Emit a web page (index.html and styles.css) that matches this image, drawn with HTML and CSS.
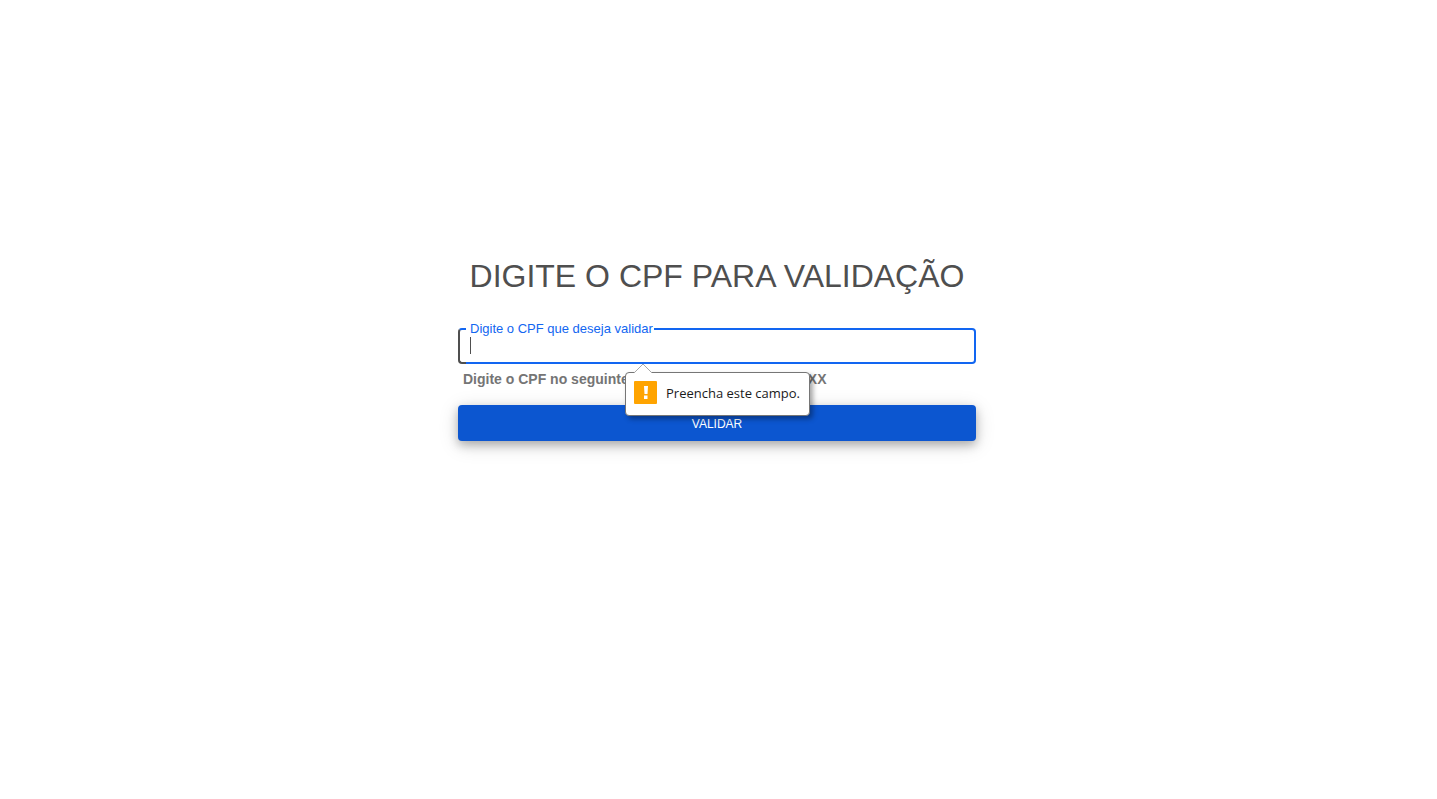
FILE: index.html
```html
<!DOCTYPE html>
<html lang="pt-BR">
<head>
<meta charset="utf-8">
<title>Validação de CPF</title>
<link rel="stylesheet" href="styles.css">
</head>
<body>
<main class="page">
  <form class="form" novalidate>
    <h1 class="title">DIGITE O CPF PARA VALIDAÇÃO</h1>
    <div class="field">
      <div class="notch" aria-hidden="true">
        <span class="notch-leading"></span>
        <span class="notch-middle"></span>
        <span class="notch-trailing"></span>
      </div>
      <label class="label" for="cpf">Digite o CPF que deseja validar</label>
      <input class="input" id="cpf" type="text" required aria-describedby="hint">
      <span class="caret"></span>
      <div class="tooltip" role="alert">
        <svg class="tooltip-arrow" width="18" height="10" viewBox="0 0 18 10" aria-hidden="true">
          <path d="M0 10 L9 1 L18 10" fill="#fff" stroke="#a8a8a8"/>
        </svg>
        <svg width="23" height="23" viewBox="0 0 23 23" aria-hidden="true">
          <rect width="23" height="23" rx="1" fill="#ffa400"/>
          <path d="M10 5h4l-.5 8h-3zM10 14.500h3.500v3.500h-3.500z" fill="#fff"/>
        </svg>
        <span>Preencha este campo.</span>
      </div>
    </div>
    <p class="hint" id="hint"><span>Digite o CPF no seguinte formato:</span><span>XXX.XXX.XXX-XX</span></p>
    <button class="button" type="submit">VALIDAR</button>
  </form>
</main>
</body>
</html>
```
FILE: styles.css
```css
* {
  box-sizing: border-box;
}

body {
  margin: 0;
  background: #fff;
  color: #4f4f4f;
  font-family: "Liberation Sans", Arial, sans-serif;
}

.page {
  display: flex;
  align-items: flex-start;
  justify-content: center;
  min-height: 100vh;
  padding: 256px 3px 0 0;
}

.form {
  display: flex;
  flex-direction: column;
  width: 36%;
  min-width: 518px;
}

.title {
  margin: 0 0 32px;
  font-size: 32px;
  font-weight: 400;
  line-height: 40px;
  text-align: center;
  white-space: nowrap;
}

.field {
  position: relative;
  height: 36px;
}

.notch {
  position: absolute;
  inset: 0;
  display: flex;
}

.notch-leading {
  width: 8px;
  border: 2px solid #1266f1;
  border-right: 0;
  border-left-color: #4f4f4f;
  border-bottom-color: #4f4f4f;
  border-radius: 4px 0 0 4px;
}

.notch-middle {
  width: 188px;
  border-bottom: 2px solid #1266f1;
}

.notch-trailing {
  flex: 1;
  border: 2px solid #1266f1;
  border-left: 0;
  border-radius: 0 4px 4px 0;
}

.label {
  position: absolute;
  top: -8px;
  left: 12px;
  color: #1266f1;
  font-size: 13px;
  line-height: 17px;
  white-space: nowrap;
}

.input {
  position: relative;
  width: 100%;
  height: 36px;
  padding: 5px 12px;
  border: 0;
  outline: 0;
  background: transparent;
  color: #4f4f4f;
  font: 16px "Liberation Sans", Arial, sans-serif;
}

.caret {
  position: absolute;
  top: 9px;
  left: 12px;
  width: 1px;
  height: 17px;
  background: #4f4f4f;
}

.tooltip {
  position: absolute;
  z-index: 2;
  top: 44px;
  left: 167px;
  display: flex;
  align-items: center;
  gap: 9px;
  height: 44px;
  padding: 0 9px 3px 8px;
  border: 1px solid #767676;
  border-radius: 4px;
  background: #fff;
  box-shadow: 3px 3px 5px rgba(0, 0, 0, 0.35);
  color: #1a1a1a;
  font: 13px "Open Sans", "Noto Sans", sans-serif;
  white-space: nowrap;
}

.tooltip-arrow {
  position: absolute;
  top: -10px;
  left: 8px;
}

.hint {
  display: flex;
  gap: 22px;
  margin: 7px 0 17px 5px;
  color: #757575;
  font-size: 14px;
  font-weight: 700;
  line-height: 17px;
  white-space: nowrap;
}

.button {
  height: 36px;
  padding: 1px 0 0;
  border: 0;
  border-radius: 4px;
  background: #0c56d0;
  box-shadow: 0 4px 10px rgba(0, 0, 0, 0.25), 0 4px 20px rgba(0, 0, 0, 0.15);
  color: #fff;
  font: 12px "Liberation Sans", Arial, sans-serif;
}
```
